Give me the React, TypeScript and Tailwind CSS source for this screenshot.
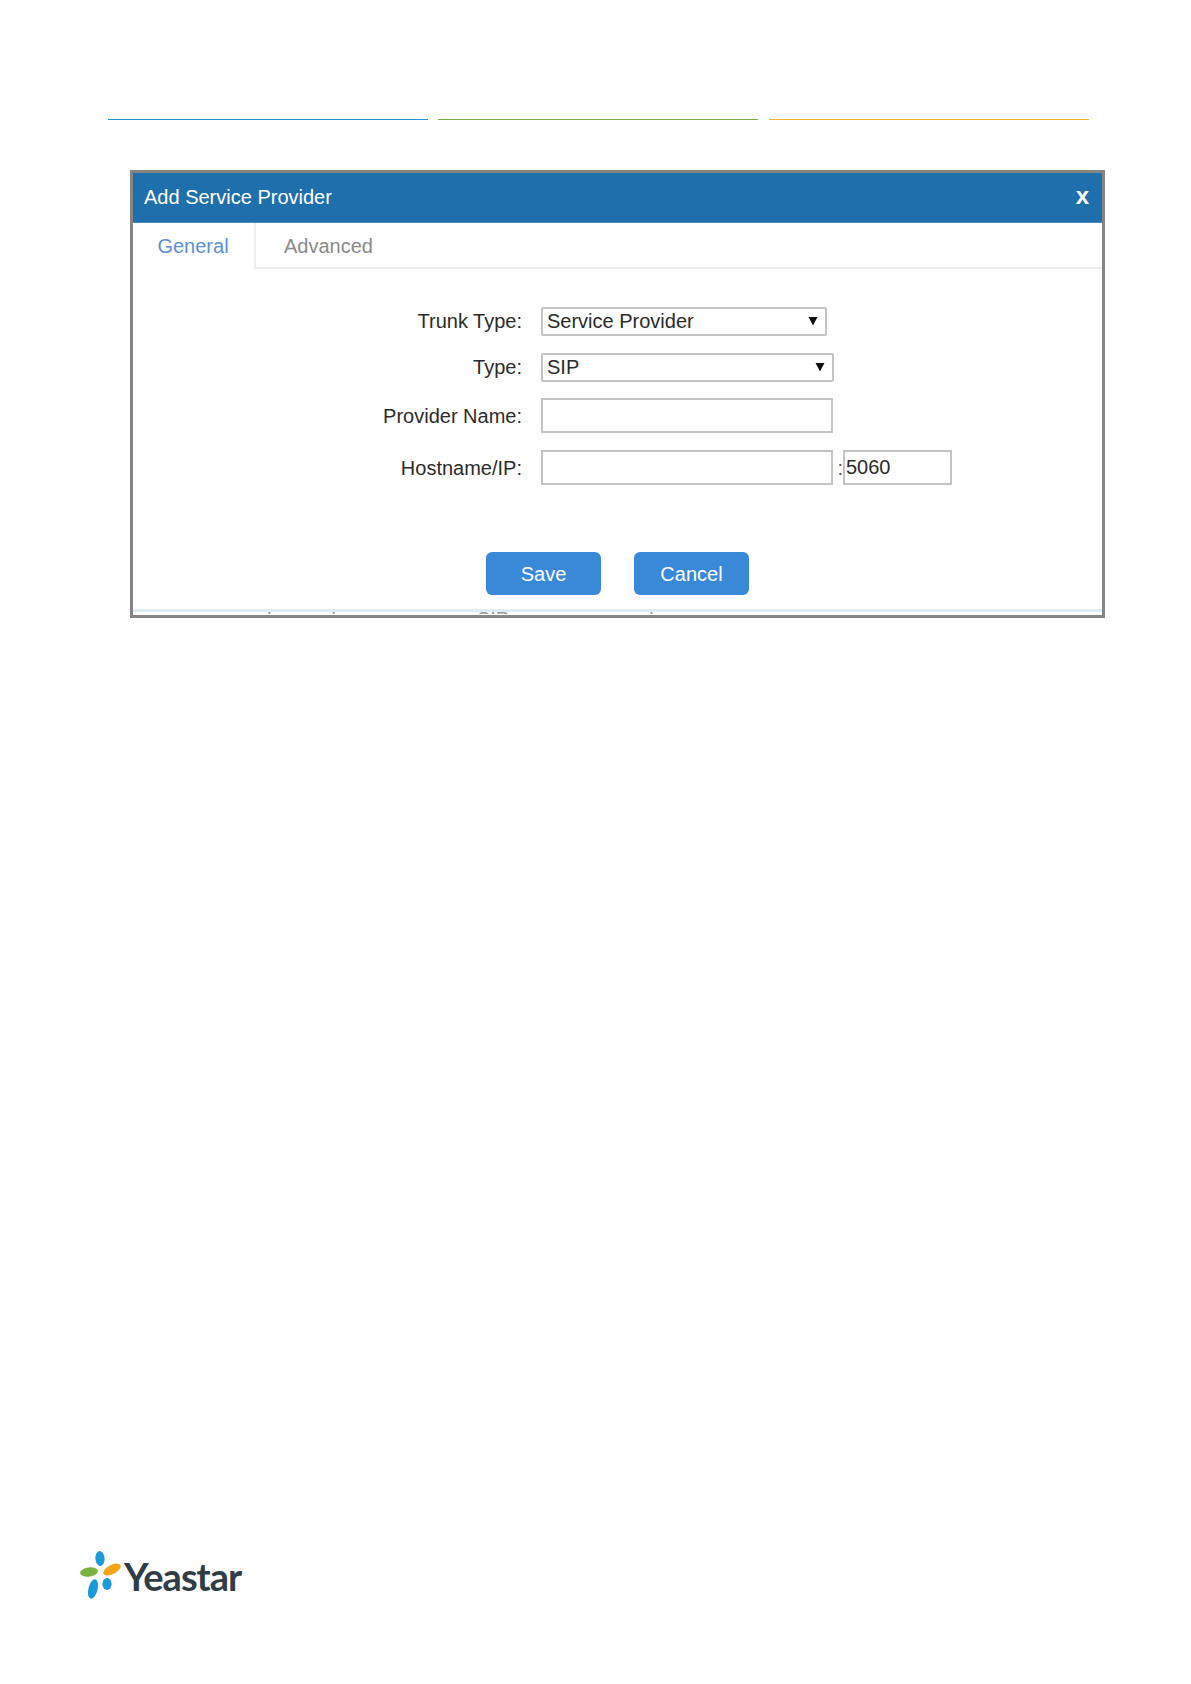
const labelCls = 'w-[408px] shrink-0 text-right text-[20px] leading-none text-[#2b2b2b] pr-[19px]'
const selectCls = 'h-[29px] flex items-center justify-between border-2 border-[#c4c4c4] rounded-[2px] bg-white text-[20px] leading-none text-[#2b2b2b] pl-[4px] pb-[1px]'
const inputCls = 'h-[35px] border-2 border-[#c4c4c4] bg-white text-[20px] text-[#2b2b2b] outline-none'
const markCls = '-mt-[3px] text-[20px] leading-none text-[#999]'

function Caret() {
  return (
    <svg width="10" height="10" viewBox="0 0 10 10" className="shrink-0">
      <path d="M0.5 1H9.5L5 9.5Z" fill="#111" />
    </svg>
  )
}

function Logo() {
  return (
    <div className="flex items-center ml-[80px] h-[50px]">
      <svg width="42" height="50" viewBox="0 0 42 50" className="shrink-0">
        <ellipse cx="20" cy="7.5" rx="4.6" ry="7.5" fill="#1a9ad6" transform="rotate(-4 20 7.5)" />
        <ellipse cx="9" cy="21" rx="9" ry="4.6" fill="#79b23c" transform="rotate(-8 9 21)" />
        <ellipse cx="32" cy="18.5" rx="9.5" ry="4.6" fill="#f2a516" transform="rotate(-28 32 18.5)" />
        <ellipse cx="13" cy="38" rx="4.6" ry="10" fill="#1a9ad6" transform="rotate(14 13 38)" />
        <ellipse cx="27" cy="33" rx="4.6" ry="6" fill="#1a9ad6" />
      </svg>
      <span className="ml-[2px] font-['Lato',sans-serif] font-bold text-[38px] leading-none text-[#2f3d46] tracking-[-1px]">Yeastar</span>
    </div>
  )
}

export default function App() {
  return (
    <div className="min-h-[1684px] flex flex-col bg-white font-['Liberation_Sans',Arial,sans-serif]">
      {/* top rules */}
      <div className="flex ml-[108px] mt-[119px]">
        <div className="w-[320px] h-px bg-[#2a95d0]" />
        <div className="ml-[10px] w-[320px] h-px bg-[#7aad45]" />
        <div className="ml-[11px] w-[320px] h-px bg-[#f0b429]" />
      </div>

      <div className="ml-[130px] mt-[50px] w-[975px] h-[448px] border-[3px] border-[#858585] overflow-hidden flex flex-col">
        <div className="h-[50px] shrink-0 flex items-center justify-between bg-[#1f6fad] border-b border-[#4a8cc0] text-white pl-[11px] pr-[13px] pb-[2px]">
          <span className="text-[20px] leading-none">Add Service Provider</span>
          <span className="text-[24px] font-bold leading-none -mt-[2px]">x</span>
        </div>

        {/* tabs */}
        <div className="h-[46px] shrink-0 flex text-[20px]">
          <div className="w-[123px] flex items-center justify-center border-r-2 border-[#eee] text-[#5b8fd9] pr-[1px]">General</div>
          <div className="flex-1 flex items-center pl-[28px] pt-[2px] border-b-2 border-[#eee] text-[#8a8a8a]">Advanced</div>
        </div>

        <div className="flex-1 flex flex-col">
          <div className="flex items-center mt-[38px]">
            <div className={`${labelCls} pb-[1px]`}>Trunk Type:</div>
            <div className={`${selectCls} w-[286px] pr-[7px]`}>
              Service Provider
              <Caret />
            </div>
          </div>
          <div className="flex items-center mt-[17px]">
            <div className={`${labelCls} pb-[1px]`}>Type:</div>
            <div className={`${selectCls} w-[293px] pr-[7px]`}>
              SIP
              <Caret />
            </div>
          </div>
          <div className="flex items-center mt-[16px]">
            <div className={labelCls}>Provider Name:</div>
            <input readOnly className={`${inputCls} w-[292px]`} />
          </div>
          <div className="flex items-center mt-[17px]">
            <div className={labelCls}>Hostname/IP:</div>
            <input readOnly className={`${inputCls} w-[292px]`} />
            <span className="w-[10px] text-[20px] leading-none text-[#555] text-right">:</span>
            <input readOnly defaultValue="5060" className={`${inputCls} w-[109px] pl-[1px]`} />
          </div>

          <div className="flex ml-[353px] mt-[67px]">
            <button className="w-[115px] h-[43px] rounded-[6px] bg-[#3a89d9] text-white text-[20px] leading-none">Save</button>
            <button className="ml-[33px] w-[115px] h-[43px] rounded-[6px] bg-[#3a89d9] text-white text-[20px] leading-none">Cancel</button>
          </div>

          {/* next page row, nearly all clipped by the dialog edge */}
          <div className="mt-auto h-[3px] bg-[#deedf4]" />
          <div className="h-[2px] mb-[1px] overflow-hidden flex items-start">
            <span className={`${markCls} ml-[134px]`}>l</span>
            <span className={`${markCls} ml-[60px]`}>l</span>
            <span className={`${markCls} ml-[141px]`}>SIP</span>
            <span className={`${markCls} ml-[140px]`}>l</span>
          </div>
        </div>
      </div>

      <div className="mt-auto mb-[83px]">
        <Logo />
      </div>
    </div>
  )
}
